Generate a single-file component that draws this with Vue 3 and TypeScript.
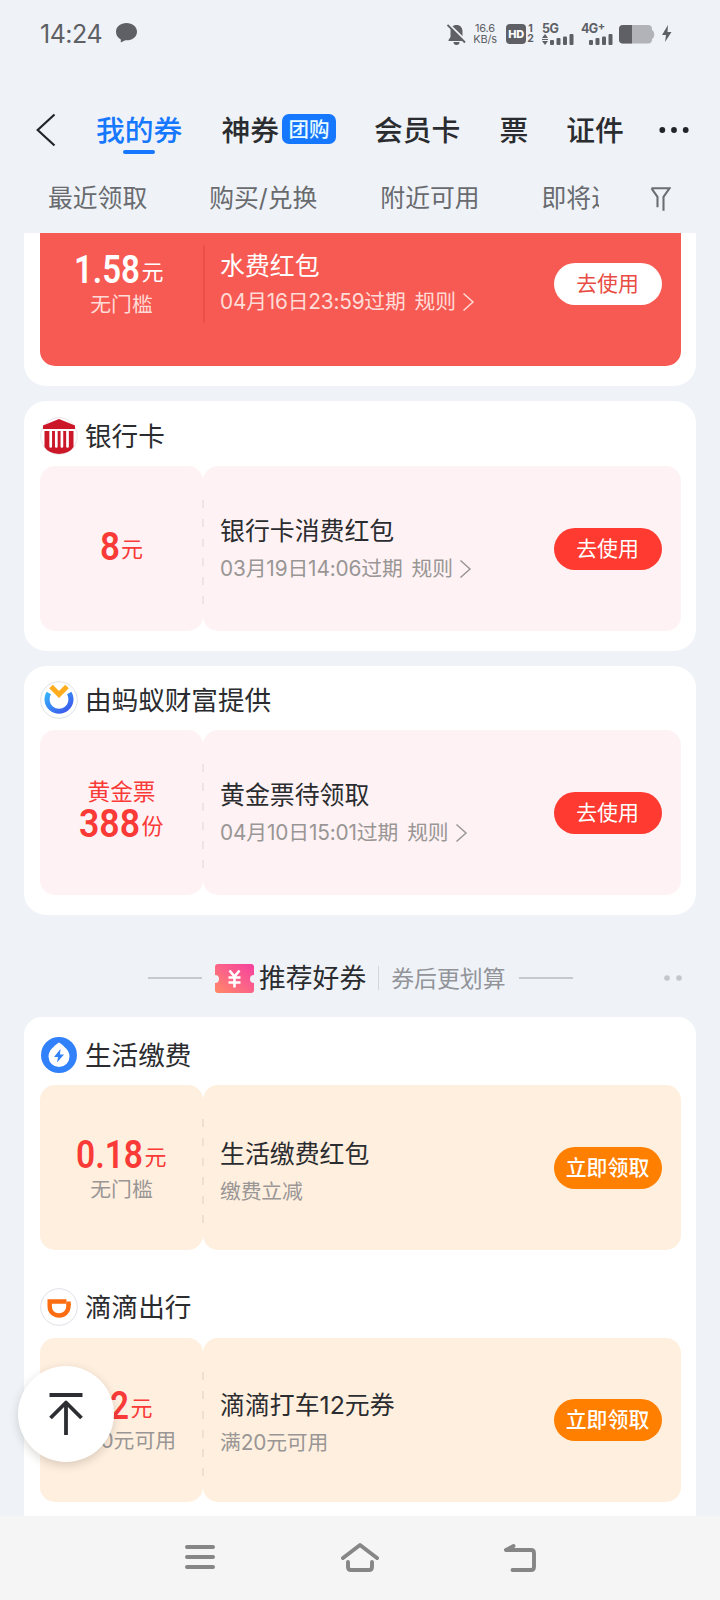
<script setup lang="ts">
interface Ticket {
  id: string
  brand: string
  icon: 'none' | 'bank' | 'fortune' | 'life' | 'didi'
  tone: 'solid' | 'pink' | 'peach'
  over?: string
  amount: string
  amountWidth: number
  unit: string
  under?: string
  title: string
  desc: string
  rule?: boolean
  action: string
}

const tabs = [
  { text: '我的券', active: true },
  { text: '神券', badge: '团购' },
  { text: '会员卡' },
  { text: '票' },
  { text: '证件' },
]

const filters = ['最近领取', '购买/兑换', '附近可用', '即将过期']

const owned: Ticket[] = [
  { id: 'water', brand: '', icon: 'none', tone: 'solid', amount: '1.58', amountWidth: 66, unit: '元', under: '无门槛', title: '水费红包', desc: '04月16日23:59过期', rule: true, action: '去使用' },
  { id: 'bank', brand: '银行卡', icon: 'bank', tone: 'pink', amount: '8', amountWidth: 20, unit: '元', title: '银行卡消费红包', desc: '03月19日14:06过期', rule: true, action: '去使用' },
  { id: 'gold', brand: '由蚂蚁财富提供', icon: 'fortune', tone: 'pink', over: '黄金票', amount: '388', amountWidth: 61, unit: '份', title: '黄金票待领取', desc: '04月10日15:01过期', rule: true, action: '去使用' },
]

const offers: Ticket[] = [
  { id: 'life', brand: '生活缴费', icon: 'life', tone: 'peach', amount: '0.18', amountWidth: 67, unit: '元', under: '无门槛', title: '生活缴费红包', desc: '缴费立减', action: '立即领取' },
  { id: 'didi', brand: '滴滴出行', icon: 'didi', tone: 'peach', amount: '12', amountWidth: 38, unit: '元', under: '满20元可用', title: '滴滴打车12元券', desc: '满20元可用', action: '立即领取' },
]

const groups = [
  ...owned.map((t) => ({ id: t.id, items: [t], offer: false })),
  { id: 'offers', items: offers, offer: true },
]
</script>

<template>
  <div class="screen">
    <header class="status">
      <span class="clock">14:24</span>
      <svg class="bubble" width="21" height="20" viewBox="0 0 21 20"><path d="M10.500 0C4.600 0 0 3.800 0 8.800c0 3.500 1.800 6 4.800 7.600V19.500l4.500-2.200c6.500.5 11.700-3.200 11.700-8.500C21 3.800 16.400 0 10.500 0z" fill="#5e6065" /></svg>
      <div class="signals">
        <svg class="bell" width="19" height="21" viewBox="0 0 19 21">
          <path d="M9.500 1C5.700 1 3.500 3.700 3.500 7.300V13L1.500 16v1h16v-1l-2-3V7.300C15.500 3.700 13.300 1 9.500 1zM6.500 18a3 3 0 0 0 6 0z" fill="#5e6065" />
          <path d="M1.800 0L19 17" stroke="#eff2f8" stroke-width="2" /><path d="M.5 1L18 18.500" stroke="#5e6065" stroke-width="1.800" />
        </svg>
        <span class="rate"><i>16.6</i><i>KB/s</i></span>
        <span class="hd">HD</span>
        <span class="sims"><i>1</i><i>2</i></span>
        <div class="net net-a"><b>5G</b>
          <svg width="32" height="12" viewBox="0 0 32 12" fill="#5e6065"><path d="M0 4l3-4 3 4zM0 7l3 4 3-4zM0 5h6v1H0z" /><rect x="8" y="6" width="4" height="5" rx="1" /><rect x="14.500" y="4" width="4" height="7" rx="1" /><rect x="21" y="2.500" width="4" height="8.500" rx="1" /><rect x="27.500" y="0" width="4" height="11" rx="1" /></svg>
        </div>
        <div class="net net-b"><b>4G<sup>+</sup></b>
          <svg width="32" height="12" viewBox="0 0 32 12" fill="#5e6065"><rect x="8" y="6" width="4" height="5" rx="1" /><rect x="14.500" y="4" width="4" height="7" rx="1" /><rect x="21" y="2.500" width="4" height="8.500" rx="1" /><rect x="27.500" y="0" width="4" height="11" rx="1" /></svg>
        </div>
        <svg class="battery" width="36" height="19" viewBox="0 0 36 19"><rect width="33" height="18.500" rx="4" fill="#b1b3b9" /><path d="M33 5c3 1 3 8 0 9z" fill="#b1b3b9" /><path d="M13 0H4a4 4 0 0 0-4 4v10.500a4 4 0 0 0 4 4h9z" fill="#5e6065" /></svg>
        <svg width="10" height="18" viewBox="0 0 10 18"><path d="M6 0L0 10h4L3 17 9.500 7H5.500z" fill="#5e6065" /></svg>
      </div>
    </header>

    <nav class="tabs">
      <svg class="back" width="20" height="34" viewBox="0 0 20 34"><path d="M18.500 1.500L1.700 17 18.500 32.500" fill="none" stroke="#222427" stroke-width="2.200" /></svg>
      <div v-for="(tab, i) in tabs" :key="tab.text" class="tab" :class="['tab-' + i, { active: tab.active }]">
        <span>{{ tab.text }}</span><em v-if="tab.badge">{{ tab.badge }}</em>
      </div>
      <svg class="more" width="30" height="8" viewBox="0 0 30 8" fill="#222427"><circle cx="3.300" cy="4" r="2.900" /><circle cx="15" cy="4" r="2.900" /><circle cx="26.700" cy="4" r="2.900" /></svg>
    </nav>

    <div class="filters">
      <div class="filter-strip">
        <span v-for="(f, i) in filters" :key="f" :class="'filter-' + i">{{ f }}</span>
      </div>
      <svg width="21" height="25" viewBox="0 0 21 25"><path d="M1.500 1.300h18l-6 8.500v14M1.500 1.300l6 8.500v10.400" fill="none" stroke="#6c6e72" stroke-width="2.100" /></svg>
    </div>

    <main class="list">
      <template v-for="group in groups" :key="group.id">
        <div v-if="group.offer" class="section">
          <i class="rule-line" />
          <svg width="39" height="29" viewBox="0 0 39 29">
            <defs><linearGradient id="coupon" x1="0" y1="1" x2="1" y2="0"><stop offset="0" stop-color="#ff8a65" /><stop offset=".5" stop-color="#fb6388" /><stop offset="1" stop-color="#f6409f" /></linearGradient></defs>
            <path d="M3 0h33a3 3 0 0 1 3 3v8a4 4 0 0 0 0 8v7a3 3 0 0 1-3 3H3a3 3 0 0 1-3-3v-7a4 4 0 0 0 0-8V3a3 3 0 0 1 3-3z" fill="url(#coupon)" />
            <path d="M14.500 6.500l5 6 5-6M13.500 13.500h12M13.500 18.500h12M19.500 12.500v11" fill="none" stroke="#fff" stroke-width="2.600" />
          </svg>
          <strong>推荐好券</strong><i class="bar" /><span>券后更划算</span><i class="rule-line" />
          <svg class="pager" width="18" height="6" viewBox="0 0 18 6" fill="#c4c6cc"><circle cx="3" cy="3" r="2.800" /><circle cx="15" cy="3" r="2.800" /></svg>
        </div>
        <section class="card" :class="'card-' + group.id">
          <template v-for="t in group.items" :key="t.id">
            <div v-if="t.brand" class="brand" :class="'brand-' + t.id">
              <svg v-if="t.icon === 'bank'" width="38" height="38" viewBox="0 0 38 38">
                <circle cx="19" cy="19" r="18.300" fill="#fff" stroke="#e6e4e8" />
                <path d="M19 2L35 8.500V12H3V8.500z" fill="#cc1729" />
                <path d="M4.500 14H33.500V30Q30 36 19 37Q8 36 4.500 30z" fill="#cc1729" />
                <path d="M10.700 14.500v15M16.300 14.500v15M21.900 14.500v15M27.500 14.500v15" stroke="#fff" stroke-width="2.700" stroke-linecap="round" />
              </svg>
              <svg v-else-if="t.icon === 'fortune'" width="38" height="38" viewBox="0 0 38 38">
                <defs><linearGradient id="ring" x2="1" y2="1"><stop stop-color="#35b1fb" /><stop offset="1" stop-color="#3d53ec" /></linearGradient></defs>
                <circle cx="19" cy="19" r="18.300" fill="#fff" stroke="#dfe1e6" />
                <path d="M8.800 12a12 12 0 1 0 20.400 0" fill="none" stroke="url(#ring)" stroke-width="5" />
                <path d="M11 5.500l8 8 8-8" fill="none" stroke="#ffad1f" stroke-width="5" />
              </svg>
              <svg v-else-if="t.icon === 'life'" width="38" height="38" viewBox="0 0 38 38">
                <circle cx="19" cy="19" r="18" fill="#3181fa" />
                <path d="M19 6.500c5 3.500 10.500 8 10.500 14a10.500 10.500 0 0 1-21 0c0-6 5.500-10.500 10.500-14z" fill="#fff" />
                <path d="M20.500 13l-6.500 8h4l-1 5.500 7-8h-4z" fill="#3181fa" />
              </svg>
              <svg v-else width="38" height="38" viewBox="0 0 38 38">
                <circle cx="19" cy="19" r="18.300" fill="#fff" stroke="#dfe1e6" />
                <path d="M26.500 13.500H9.700v4.500c0 6 4 9.500 9.300 9.500s9.500-4 9.500-9.500v-2.500" fill="none" stroke="#fc6d12" stroke-width="4.400" />
                <path d="M26.500 13.500h4.200v4h-4.200z" fill="#fc6d12" />
              </svg>
              <h2>{{ t.brand }}</h2>
            </div>
            <article class="ticket" :class="[t.tone, 'ticket-' + t.id]">
              <div class="value">
                <span v-if="t.over" class="over">{{ t.over }}</span>
                <div class="amount">
                  <svg :width="t.amountWidth" height="44" :viewBox="`0 0 ${t.amountWidth} 44`">
                    <text x="0" y="36" :textLength="t.amountWidth" lengthAdjust="spacingAndGlyphs">{{ t.amount }}</text>
                  </svg>
                  <span>{{ t.unit }}</span>
                </div>
                <span v-if="t.under" class="under">{{ t.under }}</span>
              </div>
              <div class="detail">
                <div class="copy">
                  <h3>{{ t.title }}</h3>
                  <p><span>{{ t.desc }}</span><template v-if="t.rule"><span class="rules">规则</span><svg width="13" height="20" viewBox="0 0 13 20"><path d="M1.500 1.500L11 10 1.500 18.500" fill="none" stroke="currentColor" stroke-width="1.500" /></svg></template></p>
                </div>
                <button type="button">{{ t.action }}</button>
              </div>
              <i class="tear" />
            </article>
          </template>
        </section>
      </template>
    </main>

    <button type="button" class="to-top" aria-label="回到顶部">
      <svg width="34" height="44" viewBox="0 0 34 44" fill="none" stroke="#2d2e31" stroke-width="3.800"><path d="M.5 3h33M17 10.500V43M1.500 26L17 10.500 32.500 26" stroke-linejoin="round" /></svg>
    </button>

    <footer class="system-nav">
      <svg width="30" height="26" viewBox="0 0 30 26" stroke="#868686" stroke-width="4" stroke-linecap="round"><path d="M2 3h26M2 13h26M2 23h26" /></svg>
      <svg width="38" height="30" viewBox="0 0 38 30" fill="none" stroke="#868686" stroke-width="3.900" stroke-linecap="round" stroke-linejoin="round"><path d="M2 16L19 3 36 16M7 20v5q0 3 3 3h18q3 0 3-3v-5" /></svg>
      <svg width="33" height="29" viewBox="0 0 33 29" fill="none" stroke="#868686" stroke-width="3.900" stroke-linecap="round" stroke-linejoin="round"><path d="M9.500 3L2 7H27q3 0 3 3V24q0 3-3 3H8.500" /></svg>
    </footer>
  </div>
</template>

<style>
html, body { margin: 0; background: #eff2f8; }
</style>

<style scoped>
.screen {
  position: relative;
  display: flex;
  flex-direction: column;
  width: 720px;
  height: 1600px;
  overflow: hidden;
  background: #eff3f8;
  color: #2b2c2f;
  font-family: Inter, "Noto Sans CJK SC", sans-serif;
}
.screen * { box-sizing: border-box; }
svg { display: block; flex: none; }
i, em { font-style: normal; }
h2, h3, p { margin: 0; font-weight: 400; }
button { border: 0; padding: 0; font-family: inherit; }

.status { display: flex; align-items: center; height: 68px; padding: 0 48px 0 40px; color: #5e6065; }
.clock { width: 76px; font-size: 25px; letter-spacing: -0.5px; white-space: nowrap; }
.bubble { margin-top: -3px; }
.signals { display: flex; align-items: center; margin-left: auto; }
.rate { display: flex; flex-direction: column; width: 26px; margin-left: 6px; font-size: 11px; line-height: 11px; text-align: center; letter-spacing: -0.2px; white-space: nowrap; }
.hd { width: 20px; height: 20px; margin-left: 8px; border-radius: 4px; background: #5e6065; color: #fff; font-size: 11px; font-weight: 800; line-height: 20px; text-align: center; letter-spacing: -0.3px; }
.sims { display: flex; flex-direction: column; width: 9px; font-size: 10.500px; font-weight: 700; line-height: 10.500px; text-align: center; }
.net { display: flex; flex-direction: column; justify-content: space-between; height: 22px; margin-left: 7px; }
.net b { height: 11px; font-size: 12.500px; font-weight: 700; line-height: 11px; letter-spacing: -0.6px; white-space: nowrap; }
.net sup { font-size: 11px; line-height: 0; vertical-align: 3px; }
.net svg { margin-bottom: -1px; }
.battery { margin: 0 7px 0 6px; }

.tabs { display: flex; align-items: center; height: 84px; padding: 0 31px 0 36px; margin-top: 20px; }
.back { margin-right: 40px; }
.tab { position: relative; display: flex; align-items: center; padding-top: 2px; font-size: 28.800px; font-weight: 500; line-height: 40px; white-space: nowrap; }
.tab em { margin: -5px 0 0 3px; width: 54px; height: 30px; border-radius: 7px; background: #1677ff; color: #e8fbff; font-size: 20.500px; line-height: 31px; text-align: center; }
.tab-1 { margin-left: 39px; }
.tab-2 { margin-left: 38px; }
.tab-3 { margin-left: 39px; }
.tab-4 { margin-left: 38px; }
.tab.active { color: #1677ff; }
.tab.active::after { content: ""; position: absolute; left: 27px; bottom: -3px; width: 32px; height: 4px; border-radius: 2px; background: #1677ff; }
.more { margin-left: auto; }

.filters { display: flex; align-items: center; height: 61px; padding-left: 48px; }
.filter-strip { display: flex; width: 551px; overflow: hidden; color: #696b6f; font-size: 24.800px; line-height: 36px; white-space: nowrap; margin-top: -10px; }
.filter-strip span { flex: none; }
.filter-1 { margin-left: 62px; }
.filter-2 { margin-left: 63px; }
.filter-3 { margin-left: 62px; }
.filters > svg { margin: -7px 0 0 51px; }

.list { display: flex; flex-direction: column; flex: none; height: 1283px; padding: 0 24px; overflow: hidden; }
.card { flex: none; margin-bottom: 15px; padding: 0 15px 20px 16px; border-radius: 22px; background: #fff; }
.card-water { margin-top: -52px; padding-top: 20px; border-radius: 0 0 22px 22px; }
.card-gold { margin-bottom: 0; }
.card-offers { border-radius: 18px 18px 0 0; }

.brand { display: flex; align-items: center; height: 65px; padding-top: 5px; gap: 7px; }
.brand h2 { margin-top: -1px; font-size: 26.600px; line-height: 38px; white-space: nowrap; }
.brand-gold { height: 64px; padding-top: 4px; }
.brand-life { height: 68px; padding-top: 8px; }
.brand-didi { height: 88px; padding-top: 26px; }

.ticket { position: relative; display: flex; height: 165px; }
.ticket-didi { height: 164px; }
.value { display: flex; flex-direction: column; align-items: center; justify-content: center; width: 163px; border-radius: 15px; background: var(--paper); color: #f93a37; }
.detail { display: flex; align-items: center; justify-content: space-between; flex: 1; padding: 0 19px 0 17px; border-radius: 15px; background: var(--paper); }
.tear { position: absolute; left: 162px; top: 34px; width: 2px; height: 105px; background: repeating-linear-gradient(#f0e3e4 0 8px, transparent 8px 19.300px); }
.pink { --paper: #fef2f4; }
.peach { --paper: #ffefdf; }
.peach .tear { background: repeating-linear-gradient(#eee0d0 0 8px, transparent 8px 19.300px); }
.solid { border-radius: 15px; background: #f75a53; }
.solid .value { color: #fff; }
.solid .tear { left: 163px; top: 44px; height: 78px; background: #ed4e48; }

.amount { display: flex; align-items: flex-end; gap: 1px; height: 29px; }
.amount svg { margin-bottom: -8px; overflow: visible; }
.amount text { font-family: Roboto, sans-serif; font-size: 38px; font-weight: 600; fill: currentColor; }
.amount span { font-size: 22px; line-height: 29px; margin-bottom: -4px; }
.over { font-size: 22.700px; line-height: 28px; margin-bottom: 2px; }
.under { color: #999695; font-size: 20.800px; line-height: 28px; margin-top: 8px; white-space: nowrap; }
.solid .under { color: #ffdcd7; }
.ticket-water .value { padding-top: 6px; }
.ticket-water .amount { margin-right: 5px; }
.ticket-bank .value { padding-bottom: 7px; }
.ticket-gold .value { padding-bottom: 10px; }
.ticket-life .value { padding-top: 7px; }
.ticket-didi .value { padding-top: 5px; }
.ticket-didi .amount { margin-left: 1px; }

.copy { display: flex; flex-direction: column; padding-bottom: 2px; }
.copy h3 { font-size: 24.900px; line-height: 36px; white-space: nowrap; }
.copy p { display: flex; align-items: center; margin-top: 6px; color: #999695; font-size: 20.800px; line-height: 28px; letter-spacing: -0.14px; white-space: nowrap; }
.rules { margin: 0 6px 0 9px; }
.solid .copy h3 { color: #fff; }
.solid .copy p { color: #ffdcd7; margin-top: 4px; letter-spacing: -0.2px; }
.solid .copy { padding-bottom: 3px; }
.peach .copy { padding-top: 6px; padding-bottom: 0; }
.ticket-didi .copy { padding-top: 4px; }
.detail button { width: 108px; height: 42px; border-radius: 21px; background: #ff3a30; color: #fff; font-size: 20.900px; line-height: 42px; text-indent: -1px; white-space: nowrap; }
.solid .detail button { background: #fff; color: #e94c43; }
.peach .detail button { background: #ff8000; font-weight: 500; }

.section { position: relative; display: flex; align-items: center; flex: none; height: 102px; padding: 24px 0 0 124px; }
.rule-line { width: 54px; height: 2px; background: #c7c9ce; }
.section > svg:first-of-type { margin: 0 5px 0 13px; }
.section strong { font-size: 26.800px; font-weight: 400; line-height: 38px; white-space: nowrap; }
.bar { width: 1px; height: 24px; margin: 0 12px 0 12px; background: #d5d7dc; }
.section span { margin-top: -2px; color: #929499; font-size: 22.900px; margin-right: 13px; white-space: nowrap; }
.pager { margin-left: 91px; }

.to-top { position: absolute; left: 18px; top: 1366px; display: flex; align-items: center; justify-content: center; width: 96px; height: 96px; border-radius: 50%; background: #fff; box-shadow: 0 3px 10px rgba(60, 50, 40, 0.2); }
.system-nav { display: flex; flex: none; align-items: center; height: 84px; padding: 0 183px 2px 185px; justify-content: space-between; background: #f5f5f5; }
</style>
